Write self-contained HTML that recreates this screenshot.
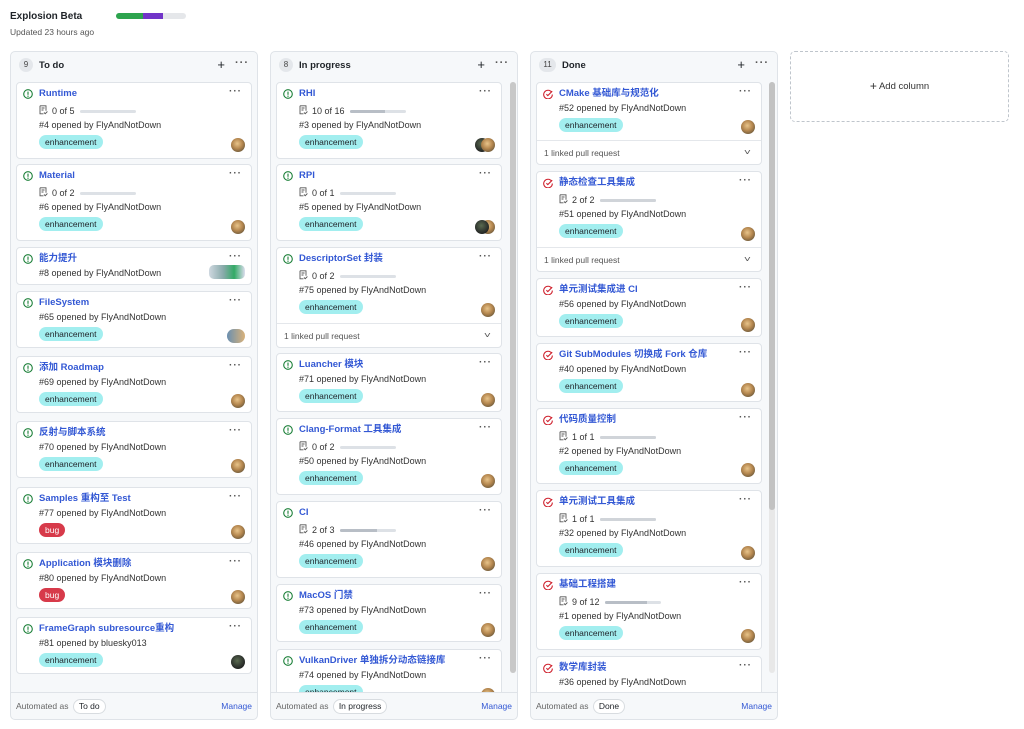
<!DOCTYPE html>
<html><head><meta charset="utf-8"><style>
*{box-sizing:border-box;margin:0;padding:0}
body{width:1024px;height:729px;background:#fff;font-family:"Liberation Sans","Noto Sans CJK SC",sans-serif;color:#1f2328;position:relative;overflow:hidden;font-size:9px}
.col{position:absolute;top:51px;width:248px;height:669px;background:#f6f8fa;border:1px solid #dfe3e8;border-radius:5px}
.hd{position:absolute;top:6px;left:8px;right:8px;height:16px;line-height:16px;font-weight:bold;font-size:9.5px}
.cnt{display:inline-block;width:14px;height:14px;border-radius:7px;background:#e4e7eb;text-align:center;line-height:14px;font-weight:normal;font-size:8px;color:#444;margin-right:6px;vertical-align:middle}
.hd .pl{position:absolute;right:24px;top:-1px;font-weight:normal;font-size:13px}
.hd .dt{position:absolute;right:0;top:-3px;font-weight:bold;font-size:11px;letter-spacing:1px;color:#555}
.clip{position:absolute;left:0;top:0;width:100%;height:641px;overflow:hidden}
.c{position:absolute;left:5px;width:236px;background:#fff;border:1px solid #dfe3e8;border-radius:4px;padding-left:22px}
.n .c{width:226px}
.t{height:18px;line-height:22px;font-weight:bold;font-size:9.5px;color:#3358d4;white-space:nowrap;position:relative}
.t svg{position:absolute;left:-16px;top:6px}
.p{height:17px;padding-top:3px;line-height:14px;color:#333;position:relative;padding-left:13px;white-space:nowrap}
.p svg{position:absolute;left:0;top:4px}
.p b{display:inline-block;height:3px;width:56px;background:#dde1e6;border-radius:2px;vertical-align:middle;margin-left:5px;position:relative;overflow:hidden}
.p b i{position:absolute;left:0;top:0;bottom:0;background:#b8bec6}
.m{height:16px;line-height:15px;color:#333;white-space:nowrap}
.l{display:inline-block;height:14px;line-height:14px;padding:0 6px;border-radius:7px;background:#a2eeef;color:#1f2328;font-size:8.5px;margin-top:1px}
.l.bug{background:#d73a4a;color:#fff}
.av{position:absolute;right:6px;width:14px;height:14px;border-radius:7px;background:radial-gradient(circle at 45% 40%,#e8c48a 0,#b5874f 45%,#6d5a3c 80%)}
.av.dk{background:radial-gradient(circle at 45% 40%,#5a6a50 0,#2b2f2b 60%,#111 90%)}
.dots{position:absolute;right:9px;top:3px;font-weight:bold;font-size:10px;letter-spacing:1px;color:#555;text-decoration:none}
.lk{position:absolute;left:0;right:0;border-top:1px solid #e4e7eb;height:24px;line-height:24px;padding-left:7px;color:#555;font-size:8.5px}
.lk span{position:absolute;right:11px;top:0;font-size:8px;transform:scaleX(1.5)}
.ft{position:absolute;left:0;right:0;bottom:0;height:27px;border-top:1px solid #dfe3e8;line-height:26px;padding-left:5px;color:#666;font-size:8.5px}
.ft .pill{display:inline-block;height:15px;line-height:13px;border:1px solid #d8dce0;border-radius:8px;padding:0 5px;color:#1f2328;background:#fff;margin-left:2px}
.ft .mg{position:absolute;right:5px;color:#3358d4}
.sb{position:absolute;width:6px;background:#e8e8e8;top:30px;border-radius:3px}
.sb i{position:absolute;left:0;right:0;top:0;background:#c2c2c2;border-radius:3px}
</style></head><body>
<svg width="0" height="0" style="position:absolute"><defs>
<g id="op"><circle cx="5" cy="5" r="4.3" fill="none" stroke="#1a7f37" stroke-width="1.1"/><rect x="4.45" y="2.6" width="1.1" height="3.2" fill="#1a7f37"/><circle cx="5" cy="7.2" r=".65" fill="#1a7f37"/></g>
<g id="cl"><path d="M8.6 3.2A4.3 4.3 0 1 0 9.3 5.5" fill="none" stroke="#cf222e" stroke-width="1.1"/><path d="M3.4 5.2l1.4 1.4 4.4-4.4" fill="none" stroke="#cf222e" stroke-width="1.1"/></g>
<g id="ck"><path d="M1 .8h6v5M1 .8v8h3.5M2.5 3h3M2.5 5h2M5 7.5l1.2 1.2 2.2-2.2" fill="none" stroke="#555" stroke-width=".9"/></g>
</defs></svg>

<div style="position:absolute;left:10px;top:11px;font-weight:bold;font-size:10px">Explosion Beta</div>
<div style="position:absolute;left:116px;top:13px;width:70px;height:6px;border-radius:3px;background:#e5e7ea;overflow:hidden"><div style="position:absolute;left:0;top:0;width:27px;height:6px;background:#2da44e"></div><div style="position:absolute;left:27px;top:0;width:20px;height:6px;background:#7134c8"></div></div>
<div style="position:absolute;left:10px;top:27px;font-size:8.5px;color:#555">Updated 23 hours ago</div>

<!-- To do -->
<div class="col" style="left:10px">
<div class="hd"><span class="cnt">9</span>To do<span class="pl">+</span><span class="dt">···</span></div>
<div class="clip">
<div class="c" style="top:30px;height:77px"><div class="t"><svg width="10" height="10"><use href="#op"/></svg>Runtime</div><div class="p"><svg width="10" height="10"><use href="#ck"/></svg>0 of 5<b></b></div><div class="m">#4 opened by FlyAndNotDown</div><div class="l">enhancement</div><s class="av" style="bottom:6px"></s><u class="dots">···</u></div>
<div class="c" style="top:112px;height:77px"><div class="t"><svg width="10" height="10"><use href="#op"/></svg>Material</div><div class="p"><svg width="10" height="10"><use href="#ck"/></svg>0 of 2<b></b></div><div class="m">#6 opened by FlyAndNotDown</div><div class="l">enhancement</div><s class="av" style="bottom:6px"></s><u class="dots">···</u></div>
<div class="c" style="top:195px;height:38px"><div class="t"><svg width="10" height="10"><use href="#op"/></svg>能力提升</div><div class="m">#8 opened by FlyAndNotDown</div><s class="av" style="bottom:5px;width:36px;border-radius:5px;background:linear-gradient(90deg,#cfd8e0,#8aa 40%,#3a6 70%,#dde)"></s><u class="dots">···</u></div>
<div class="c" style="top:239px;height:57px"><div class="t"><svg width="10" height="10"><use href="#op"/></svg>FileSystem</div><div class="m">#65 opened by FlyAndNotDown</div><div class="l">enhancement</div><s class="av" style="bottom:4px;width:18px;background:linear-gradient(90deg,#6a8fb0,#d9b27a)"></s><u class="dots">···</u></div>
<div class="c" style="top:304px;height:57px"><div class="t"><svg width="10" height="10"><use href="#op"/></svg>添加 Roadmap</div><div class="m">#69 opened by FlyAndNotDown</div><div class="l">enhancement</div><s class="av" style="bottom:4px"></s><u class="dots">···</u></div>
<div class="c" style="top:369px;height:57px"><div class="t"><svg width="10" height="10"><use href="#op"/></svg>反射与脚本系统</div><div class="m">#70 opened by FlyAndNotDown</div><div class="l">enhancement</div><s class="av" style="bottom:4px"></s><u class="dots">···</u></div>
<div class="c" style="top:435px;height:57px"><div class="t"><svg width="10" height="10"><use href="#op"/></svg>Samples 重构至 Test</div><div class="m">#77 opened by FlyAndNotDown</div><div class="l bug">bug</div><s class="av" style="bottom:4px"></s><u class="dots">···</u></div>
<div class="c" style="top:500px;height:57px"><div class="t"><svg width="10" height="10"><use href="#op"/></svg>Application 模块删除</div><div class="m">#80 opened by FlyAndNotDown</div><div class="l bug">bug</div><s class="av" style="bottom:4px"></s><u class="dots">···</u></div>
<div class="c" style="top:565px;height:57px"><div class="t"><svg width="10" height="10"><use href="#op"/></svg>FrameGraph subresource重构</div><div class="m">#81 opened by bluesky013</div><div class="l">enhancement</div><s class="av dk" style="bottom:4px"></s><u class="dots">···</u></div>
</div>
<div class="ft">Automated as <span class="pill">To do</span><span class="mg">Manage</span></div>
</div>

<!-- In progress -->
<div class="col n" style="left:270px">
<div class="hd"><span class="cnt">8</span>In progress<span class="pl">+</span><span class="dt">···</span></div>
<div class="clip">
<div class="c" style="top:30px;height:77px"><div class="t"><svg width="10" height="10"><use href="#op"/></svg>RHI</div><div class="p"><svg width="10" height="10"><use href="#ck"/></svg>10 of 16<b><i style="width:35px"></i></b></div><div class="m">#3 opened by FlyAndNotDown</div><div class="l">enhancement</div><s class="av dk" style="bottom:6px;right:12px"></s><s class="av" style="bottom:6px"></s><u class="dots">···</u></div>
<div class="c" style="top:112px;height:77px"><div class="t"><svg width="10" height="10"><use href="#op"/></svg>RPI</div><div class="p"><svg width="10" height="10"><use href="#ck"/></svg>0 of 1<b></b></div><div class="m">#5 opened by FlyAndNotDown</div><div class="l">enhancement</div><s class="av" style="bottom:6px"></s><s class="av dk" style="bottom:6px;right:12px"></s><u class="dots">···</u></div>
<div class="c" style="top:195px;height:101px"><div class="t"><svg width="10" height="10"><use href="#op"/></svg>DescriptorSet 封装</div><div class="p"><svg width="10" height="10"><use href="#ck"/></svg>0 of 2<b></b></div><div class="m">#75 opened by FlyAndNotDown</div><div class="l">enhancement</div><s class="av" style="top:55px"></s><u class="dots">···</u><div class="lk" style="top:75px">1 linked pull request<span>˅</span></div></div>
<div class="c" style="top:301px;height:59px"><div class="t"><svg width="10" height="10"><use href="#op"/></svg>Luancher 模块</div><div class="m">#71 opened by FlyAndNotDown</div><div class="l">enhancement</div><s class="av" style="bottom:4px"></s><u class="dots">···</u></div>
<div class="c" style="top:366px;height:77px"><div class="t"><svg width="10" height="10"><use href="#op"/></svg>Clang-Format 工具集成</div><div class="p"><svg width="10" height="10"><use href="#ck"/></svg>0 of 2<b></b></div><div class="m">#50 opened by FlyAndNotDown</div><div class="l">enhancement</div><s class="av" style="bottom:6px"></s><u class="dots">···</u></div>
<div class="c" style="top:449px;height:77px"><div class="t"><svg width="10" height="10"><use href="#op"/></svg>CI</div><div class="p"><svg width="10" height="10"><use href="#ck"/></svg>2 of 3<b><i style="width:37px"></i></b></div><div class="m">#46 opened by FlyAndNotDown</div><div class="l">enhancement</div><s class="av" style="bottom:6px"></s><u class="dots">···</u></div>
<div class="c" style="top:532px;height:58px"><div class="t"><svg width="10" height="10"><use href="#op"/></svg>MacOS 门禁</div><div class="m">#73 opened by FlyAndNotDown</div><div class="l">enhancement</div><s class="av" style="bottom:4px"></s><u class="dots">···</u></div>
<div class="c" style="top:597px;height:58px"><div class="t"><svg width="10" height="10"><use href="#op"/></svg>VulkanDriver 单独拆分动态链接库</div><div class="m">#74 opened by FlyAndNotDown</div><div class="l">enhancement</div><s class="av" style="bottom:4px"></s><u class="dots">···</u></div>
</div>
<div class="sb" style="left:239px;height:591px"><i style="height:591px;background:#c8c8c8"></i></div>
<div class="ft">Automated as <span class="pill">In progress</span><span class="mg">Manage</span></div>
</div>

<!-- Done -->
<div class="col n" style="left:530px">
<div class="hd"><span class="cnt" style="width:17px">11</span>Done<span class="pl">+</span><span class="dt">···</span></div>
<div class="clip">
<div class="c" style="top:30px;height:83px"><div class="t"><svg width="10" height="10"><use href="#cl"/></svg>CMake 基础库与规范化</div><div class="m">#52 opened by FlyAndNotDown</div><div class="l">enhancement</div><s class="av" style="top:37px"></s><u class="dots">···</u><div class="lk" style="top:57px">1 linked pull request<span>˅</span></div></div>
<div class="c" style="top:119px;height:101px"><div class="t"><svg width="10" height="10"><use href="#cl"/></svg>静态检查工具集成</div><div class="p"><svg width="10" height="10"><use href="#ck"/></svg>2 of 2<b><i style="width:56px;background:#d0d4d9"></i></b></div><div class="m">#51 opened by FlyAndNotDown</div><div class="l">enhancement</div><s class="av" style="top:55px"></s><u class="dots">···</u><div class="lk" style="top:75px">1 linked pull request<span>˅</span></div></div>
<div class="c" style="top:226px;height:59px"><div class="t"><svg width="10" height="10"><use href="#cl"/></svg>单元测试集成进 CI</div><div class="m">#56 opened by FlyAndNotDown</div><div class="l">enhancement</div><s class="av" style="bottom:4px"></s><u class="dots">···</u></div>
<div class="c" style="top:291px;height:59px"><div class="t"><svg width="10" height="10"><use href="#cl"/></svg>Git SubModules 切换成 Fork 仓库</div><div class="m">#40 opened by FlyAndNotDown</div><div class="l">enhancement</div><s class="av" style="bottom:4px"></s><u class="dots">···</u></div>
<div class="c" style="top:356px;height:76px"><div class="t"><svg width="10" height="10"><use href="#cl"/></svg>代码质量控制</div><div class="p"><svg width="10" height="10"><use href="#ck"/></svg>1 of 1<b><i style="width:56px;background:#d0d4d9"></i></b></div><div class="m">#2 opened by FlyAndNotDown</div><div class="l">enhancement</div><s class="av" style="bottom:6px"></s><u class="dots">···</u></div>
<div class="c" style="top:438px;height:77px"><div class="t"><svg width="10" height="10"><use href="#cl"/></svg>单元测试工具集成</div><div class="p"><svg width="10" height="10"><use href="#ck"/></svg>1 of 1<b><i style="width:56px;background:#d0d4d9"></i></b></div><div class="m">#32 opened by FlyAndNotDown</div><div class="l">enhancement</div><s class="av" style="bottom:6px"></s><u class="dots">···</u></div>
<div class="c" style="top:521px;height:77px"><div class="t"><svg width="10" height="10"><use href="#cl"/></svg>基础工程搭建</div><div class="p"><svg width="10" height="10"><use href="#ck"/></svg>9 of 12<b><i style="width:42px"></i></b></div><div class="m">#1 opened by FlyAndNotDown</div><div class="l">enhancement</div><s class="av" style="bottom:6px"></s><u class="dots">···</u></div>
<div class="c" style="top:604px;height:60px"><div class="t"><svg width="10" height="10"><use href="#cl"/></svg>数学库封装</div><div class="m">#36 opened by FlyAndNotDown</div><div class="l">enhancement</div><u class="dots">···</u></div>
</div>
<div class="sb" style="left:238px;height:591px"><i style="height:428px"></i></div>
<div class="ft">Automated as <span class="pill">Done</span><span class="mg">Manage</span></div>
</div>

<div style="position:absolute;left:790px;top:51px;width:219px;height:71px;border:1px dashed #bfc5cc;border-radius:5px;text-align:center;line-height:69px;font-size:9.5px;color:#333"><span style="font-size:12px;vertical-align:-1px">+</span> Add column</div>
</body></html>
